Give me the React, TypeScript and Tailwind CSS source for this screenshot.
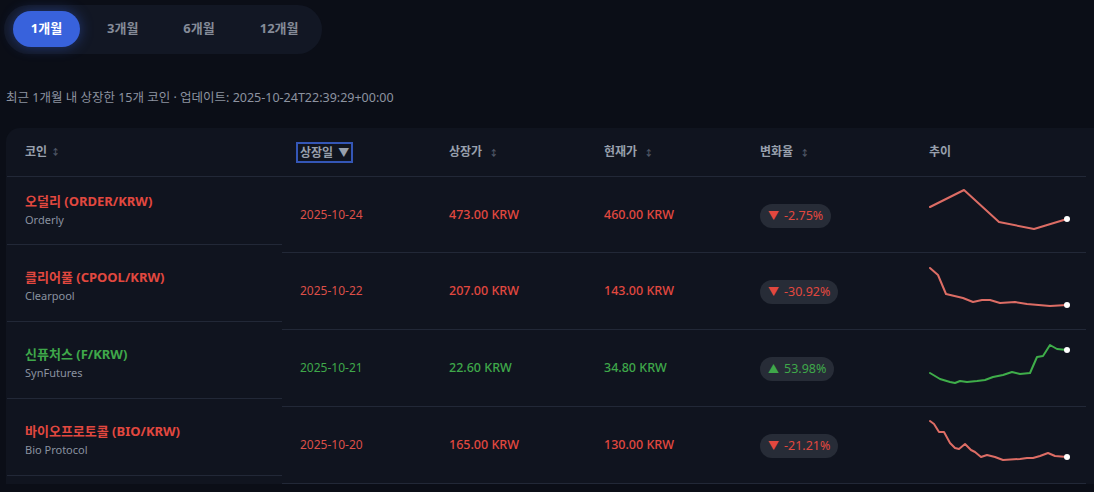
import React from 'react'

type Coin = {
  name: string
  sub: string
  date: string
  listPrice: string
  curPrice: string
  change: string
  up: boolean
  points: [number, number][]
}

const coins: Coin[] = [
  {
    name: '오덜리 (ORDER/KRW)',
    sub: 'Orderly',
    date: '2025-10-24',
    listPrice: '473.00 KRW',
    curPrice: '460.00 KRW',
    change: '-2.75%',
    up: false,
    points: [[930, 209], [964, 192], [999, 224], [1034, 231], [1067, 221]],
  },
  {
    name: '클리어풀 (CPOOL/KRW)',
    sub: 'Clearpool',
    date: '2025-10-22',
    listPrice: '207.00 KRW',
    curPrice: '143.00 KRW',
    change: '-30.92%',
    up: false,
    points: [[930, 270], [938, 277], [946, 296], [963, 300], [973, 304], [982, 302], [990, 302], [1000, 305], [1015, 304], [1027, 306], [1050, 308], [1067, 307]],
  },
  {
    name: '신퓨처스 (F/KRW)',
    sub: 'SynFutures',
    date: '2025-10-21',
    listPrice: '22.60 KRW',
    curPrice: '34.80 KRW',
    change: '53.98%',
    up: true,
    points: [[930, 375], [940, 381], [950, 384], [955, 385], [960, 383], [967, 384], [977, 383], [985, 382], [993, 379], [1003, 377], [1012, 374], [1020, 376], [1030, 375], [1037, 359], [1043, 358], [1050, 347], [1057, 351], [1067, 352]],
  },
  {
    name: '바이오프로토콜 (BIO/KRW)',
    sub: 'Bio Protocol',
    date: '2025-10-20',
    listPrice: '165.00 KRW',
    curPrice: '130.00 KRW',
    change: '-21.21%',
    up: false,
    points: [[930, 423], [934, 426], [939, 434], [944, 434], [950, 445], [955, 450], [959, 451], [965, 446], [971, 452], [975, 454], [981, 459], [987, 457], [995, 459], [1003, 462], [1020, 461], [1027, 460], [1033, 460], [1040, 458], [1048, 455], [1055, 458], [1067, 459]],
  },
]

const rowTops = [179, 255, 332, 409]

const SortIcon = () => <span className='ml-1 text-[9px] text-[#4f5665]'>↕</span>

const Sparkline = ({ points, up, top }: { points: [number, number][]; up: boolean; top: number }) => {
  const last = points[points.length - 1]
  return (
    <svg width='144' height='76' viewBox={`927 ${top} 144 76`} className='block'>
      <polyline
        points={points.map((p) => p.join(',')).join(' ')}
        fill='none'
        stroke={up ? '#3fae4a' : '#dd6d65'}
        strokeWidth='2'
        strokeLinejoin='round'
        strokeLinecap='round'
      />
      <circle cx={last[0]} cy={last[1]} r='3' fill='#ffffff' />
    </svg>
  )
}

export default function App() {
  const tabs = ['1개월', '3개월', '6개월', '12개월']

  return (
    <div
      className='w-[1094px] h-[492px] overflow-hidden bg-[#0b0e17] pl-[4px] pt-[5px]'
      style={{ fontFamily: '"Noto Sans", "Noto Sans CJK KR", sans-serif' }}
    >
      {/* period tabs */}
      <div className='inline-flex items-center gap-[9px] rounded-full bg-[#121724] pt-[6px] pb-[7px] pl-[9px] pr-[5px]'>
        {tabs.map((t, i) => (
          <button
            key={t}
            className={
              i === 0
                ? 'h-9 w-[67px] rounded-full bg-[#3862dc] text-[13px] font-bold text-white shadow-[0_0_14px_rgba(56,98,220,0.45)]'
                : 'h-9 px-[18px] rounded-full text-[13px] font-bold text-[#858b98]'
            }
          >
            {t}
          </button>
        ))}
      </div>

      <p className='mt-[35px] ml-[2px] text-[12.5px] text-[#8d93a0] leading-[18px]'>
        최근 1개월 내 상장한 15개 코인 · 업데이트: 2025-10-24T22:39:29+00:00
      </p>

      {/* table card */}
      <div className='mt-[21px] ml-[2px] w-[1100px] rounded-tl-[14px] bg-[#10141f] pl-[1px]'>
        <div className='flex'>
          {/* frozen coin column */}
          <div className='w-[275px] shrink-0'>
            <div className='h-[49px] flex items-center pl-[18px] border-b border-[#222837] text-[12px] font-semibold text-[#98a0ad]'>
              코인 <SortIcon />
            </div>
            {coins.map((c, i) => (
              <div
                key={c.name}
                className={`${i === 0 ? 'h-[68px] pb-[1px]' : 'h-[77px] pt-[6px]'} flex flex-col justify-center pl-[18px] border-b border-[#222837]`}
              >
                <div className={`text-[13px] font-bold leading-[18px] ${c.up ? 'text-[#3fa84a]' : 'text-[#e2483f]'}`}>
                  {c.name}
                </div>
                <div className='mt-[2px] text-[11px] leading-[16px] text-[#8a92a0]'>{c.sub}</div>
              </div>
            ))}
          </div>

          {/* scrolling columns */}
          <div className='w-[804px] shrink-0'>
            <div className='grid grid-cols-[149px_155px_156px_169px_175px] h-[49px] items-center border-b border-[#222837] text-[12px] font-semibold text-[#98a0ad]'>
              <div className='pl-[18px]'>
                <span className='-ml-1 inline-flex items-center border-2 border-[#3456b6] px-[2px] leading-[17px]'>
                  상장일 <span className='ml-[5px] text-[11px]'>▼</span>
                </span>
              </div>
              <div className='pl-[18px]'>상장가 <SortIcon /></div>
              <div className='pl-[18px]'>현재가 <SortIcon /></div>
              <div className='pl-[18px]'>변화율 <SortIcon /></div>
              <div className='pl-[18px]'>추이</div>
            </div>
            {coins.map((c, i) => {
              const color = c.up ? 'text-[#3fa84a]' : 'text-[#e2483f]'
              return (
                <div
                  key={c.name}
                  className={`grid grid-cols-[149px_155px_156px_169px_175px] items-center border-b border-[#222837] ${i === 0 ? 'h-[76px]' : 'h-[77px]'}`}
                >
                  <div className={`pl-[18px] text-[12px] ${c.up ? 'text-[#3fa84a]' : 'text-[#dc4f48]'}`}>{c.date}</div>
                  <div className={`pl-[18px] text-[12.5px] font-medium ${color}`}>{c.listPrice}</div>
                  <div className={`pl-[18px] text-[12.5px] font-medium ${color}`}>{c.curPrice}</div>
                  <div className='pl-[18px]'>
                    <span className={`inline-flex items-center h-6 rounded-full bg-[#272c37] px-2 text-[12.5px] ${color}`}>
                      <span className='mr-[5px] text-[11px]'>{c.up ? '▲' : '▼'}</span>
                      {c.change}
                    </span>
                  </div>
                  <div className='pl-[16px] h-full'>
                    <Sparkline points={c.points} up={c.up} top={rowTops[i]} />
                  </div>
                </div>
              )
            })}
          </div>
        </div>
      </div>
    </div>
  )
}
